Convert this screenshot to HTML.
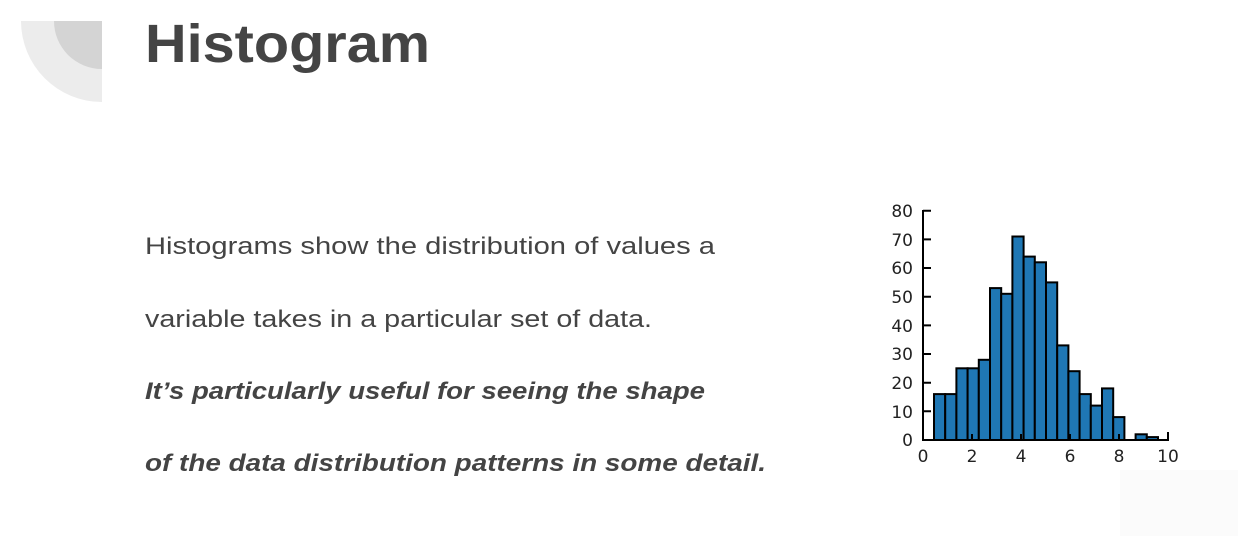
<!DOCTYPE html>
<html><head><meta charset="utf-8"><style>
html,body{margin:0;padding:0;background:#fff;}
body{width:1238px;height:536px;overflow:hidden;position:relative;}
</style></head><body>
<svg width="1238" height="536" viewBox="0 0 1238 536" xmlns="http://www.w3.org/2000/svg" style="position:absolute;left:0;top:0">
<rect x="1120" y="470" width="118" height="66" fill="#fbfbfb"/>
<path d="M21 21 H102 V102 A81 81 0 0 1 21 21 Z" fill="#ececec"/>
<path d="M54 21 H102 V69 A48 48 0 0 1 54 21 Z" fill="#d4d4d4"/>
<text x="145" y="62" font-family="Liberation Sans, sans-serif" font-weight="bold" font-size="54" fill="#444" textLength="285" lengthAdjust="spacingAndGlyphs">Histogram</text>
<g font-family="Liberation Sans, sans-serif" font-size="24" fill="#444">
<text x="145" y="254" textLength="570" lengthAdjust="spacingAndGlyphs">Histograms show the distribution of values a</text>
<text x="145" y="327" textLength="507" lengthAdjust="spacingAndGlyphs">variable takes in a particular set of data.</text>
<text x="145" y="399" font-weight="bold" font-style="italic" textLength="560" lengthAdjust="spacingAndGlyphs">It’s particularly useful for seeing the shape</text>
<text x="145" y="471" font-weight="bold" font-style="italic" textLength="621" lengthAdjust="spacingAndGlyphs">of the data distribution patterns in some detail.</text>
</g>
<g fill="#1f77b4" stroke="#000" stroke-width="2">
<rect x="934" y="394.1" width="11.2" height="45.9"/>
<rect x="945.2" y="394.1" width="11.2" height="45.9"/>
<rect x="956.4" y="368.3" width="11.2" height="71.7"/>
<rect x="967.6" y="368.3" width="11.2" height="71.7"/>
<rect x="978.8" y="359.8" width="11.2" height="80.2"/>
<rect x="990" y="288.1" width="11.2" height="151.9"/>
<rect x="1001.2" y="293.8" width="11.2" height="146.2"/>
<rect x="1012.4" y="236.5" width="11.2" height="203.5"/>
<rect x="1023.6" y="256.6" width="11.2" height="183.4"/>
<rect x="1034.8" y="262.3" width="11.2" height="177.7"/>
<rect x="1046" y="282.4" width="11.2" height="157.6"/>
<rect x="1057.2" y="345.4" width="11.2" height="94.6"/>
<rect x="1068.4" y="371.2" width="11.2" height="68.8"/>
<rect x="1079.6" y="394.1" width="11.2" height="45.9"/>
<rect x="1090.8" y="405.6" width="11.2" height="34.4"/>
<rect x="1102" y="388.4" width="11.2" height="51.6"/>
<rect x="1113.2" y="417.1" width="11.2" height="22.9"/>
<rect x="1135.6" y="434.3" width="11.2" height="5.7"/>
<rect x="1146.8" y="437.1" width="11.2" height="2.9"/>
</g>
<g stroke="#000" stroke-width="2" fill="none">
<path d="M923 210 V441 M922 440 H1169 M1168 440 V432"/>
<path d="M923 210.7 H931 M923 239.4 H931 M923 268 H931 M923 296.7 H931 M923 325.4 H931 M923 354 H931 M923 382.7 H931 M923 411.3 H931"/>
<path d="M972 440 V434 M1021 440 V434 M1070 440 V434 M1119 440 V434"/>
</g>
<g font-family="DejaVu Sans, sans-serif" font-size="17" fill="#222" text-anchor="end">
<text x="913" y="217">80</text>
<text x="913" y="246">70</text>
<text x="913" y="274">60</text>
<text x="913" y="303">50</text>
<text x="913" y="332">40</text>
<text x="913" y="360">30</text>
<text x="913" y="389">20</text>
<text x="913" y="418">10</text>
<text x="913" y="446">0</text>
</g>
<g font-family="DejaVu Sans, sans-serif" font-size="17" fill="#222" text-anchor="middle">
<text x="923" y="462">0</text>
<text x="972" y="462">2</text>
<text x="1021" y="462">4</text>
<text x="1070" y="462">6</text>
<text x="1119" y="462">8</text>
<text x="1168" y="462">10</text>
</g>
</svg>
</body></html>
